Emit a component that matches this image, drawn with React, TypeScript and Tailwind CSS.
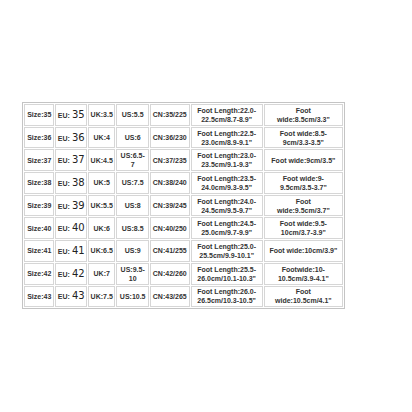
const rows: [string, string, string, string[], string, string[], string[]][] = [
  ['Size:35', '35', 'UK:3.5', ['US:5.5'], 'CN:35/225', ['Foot Length:22.0-', '22.5cm/8.7-8.9"'], ['Foot', 'wide:8.5cm/3.3"']],
  ['Size:36', '36', 'UK:4', ['US:6'], 'CN:36/230', ['Foot Length:22.5-', '23.0cm/8.9-9.1"'], ['Foot wide:8.5-', '9cm/3.3-3.5"']],
  ['Size:37', '37', 'UK:4.5', ['US:6.5-', '7'], 'CN:37/235', ['Foot Length:23.0-', '23.5cm/9.1-9.3"'], ['Foot wide:9cm/3.5"']],
  ['Size:38', '38', 'UK:5', ['US:7.5'], 'CN:38/240', ['Foot Length:23.5-', '24.0cm/9.3-9.5"'], ['Foot wide:9-', '9.5cm/3.5-3.7"']],
  ['Size:39', '39', 'UK:5.5', ['US:8'], 'CN:39/245', ['Foot Length:24.0-', '24.5cm/9.5-9.7"'], ['Foot', 'wide:9.5cm/3.7"']],
  ['Size:40', '40', 'UK:6', ['US:8.5'], 'CN:40/250', ['Foot Length:24.5-', '25.0cm/9.7-9.9"'], ['Foot wide:9.5-', '10cm/3.7-3.9"']],
  ['Size:41', '41', 'UK:6.5', ['US:9'], 'CN:41/255', ['Foot Length:25.0-', '25.5cm/9.9-10.1"'], ['Foot wide:10cm/3.9"']],
  ['Size:42', '42', 'UK:7', ['US:9.5-', '10'], 'CN:42/260', ['Foot Length:25.5-', '26.0cm/10.1-10.3"'], ['Footwide:10-', '10.5cm/3.9-4.1"']],
  ['Size:43', '43', 'UK:7.5', ['US:10.5'], 'CN:43/265', ['Foot Length:26.0-', '26.5cm/10.3-10.5"'], ['Foot', 'wide:10.5cm/4.1"']],
];

function Lines({ lines }: { lines: string[] }) {
  return (
    <>
      {lines.map((l, i) => (
        <span key={i} className="block">{l}</span>
      ))}
    </>
  );
}

export default function App() {
  const td = 'border border-[#d6d6d6] text-center align-middle p-0 h-[21.7px] whitespace-nowrap overflow-hidden';
  return (
    <div className="w-[412px] h-[412px] bg-white pt-[102px] pl-[22px]">
      <table
        className="table-fixed border-separate border-spacing-[1px] border border-[#c4c4c4] w-[323px] text-[7px] leading-[9px] font-bold text-[#333]"
        style={{ fontFamily: '"Liberation Sans", Arial, sans-serif' }}
      >
        <colgroup>
          <col className="w-[30px]" />
          <col className="w-[31px]" />
          <col className="w-[27px]" />
          <col className="w-[32px]" />
          <col className="w-[39px]" />
          <col className="w-[71px]" />
          <col className="w-[78px]" />
        </colgroup>
        <tbody>
          {rows.map((r) => (
            <tr key={r[0]}>
              <td className={td}>{r[0]}</td>
              <td className={td}>
                EU:{' '}
                <span className="font-normal text-[10px] text-[#222]" style={{ fontFamily: '"DejaVu Sans", Verdana, sans-serif' }}>
                  {r[1]}
                </span>
              </td>
              <td className={td}>{r[2]}</td>
              <td className={td}><Lines lines={r[3]} /></td>
              <td className={td}>{r[4]}</td>
              <td className={td}><Lines lines={r[5]} /></td>
              <td className={td}><Lines lines={r[6]} /></td>
            </tr>
          ))}
        </tbody>
      </table>
    </div>
  );
}
